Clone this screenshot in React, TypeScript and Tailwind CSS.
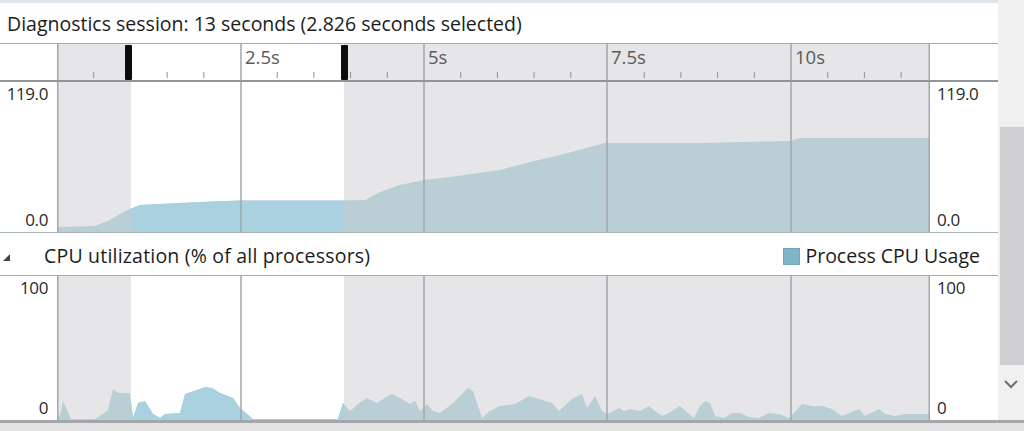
import React from "react"

const font = { fontFamily: '"Open Sans", "Noto Sans", sans-serif' }

const majors = [
  { x: 241, label: "2.5s" },
  { x: 424, label: "5s" },
  { x: 607, label: "7.5s" },
  { x: 791, label: "10s" },
]

const SEL_A = 131
const SEL_B = 344

// memory-ish curve, global page coords
const memPts: [number, number][] = [
  [57, 227], [95, 226], [110, 220], [125, 211], [140, 205], [180, 203], [200, 202],
  [240, 200.5], [340, 200.5], [365, 200], [380, 192], [400, 185], [424, 180],
  [450, 177], [500, 170], [530, 162], [560, 155], [590, 147], [605, 143],
  [700, 143], [790, 141], [800, 138], [930, 138],
]

const cpuPts: [number, number][] = [
  [57, 419], [60, 415], [63, 401], [67, 410], [71, 419], [95, 419], [103, 414], [108, 410],
  [113, 389], [118, 393], [130, 393], [133, 418], [138, 403], [145, 401], [153, 414],
  [160, 418], [165, 414], [180, 413], [185, 394], [197, 390], [205, 387], [212, 388],
  [220, 393], [233, 398], [240, 408], [253, 419], [338, 419], [343, 403], [350, 411],
  [358, 404], [367, 398], [377, 403], [383, 399], [392, 394], [400, 398], [410, 404],
  [415, 401], [420, 411], [427, 404], [433, 411], [440, 413], [453, 403], [460, 396],
  [468, 388], [473, 391], [482, 418], [490, 411], [500, 406], [515, 404], [529, 396],
  [539, 399], [552, 403], [559, 411], [572, 399], [582, 394], [587, 408], [595, 396],
  [602, 411], [607, 414], [619, 408], [624, 411], [630, 409], [640, 411], [649, 406],
  [655, 411], [662, 416], [669, 413], [680, 406], [689, 414], [694, 418], [700, 406],
  [705, 401], [710, 403], [715, 416], [724, 418], [732, 413], [740, 413], [749, 417],
  [759, 418], [769, 413], [779, 414], [789, 418], [802, 404], [812, 406], [822, 406],
  [832, 409], [842, 416], [849, 413], [859, 409], [865, 416], [879, 409], [885, 414],
  [895, 416], [905, 414], [925, 414], [930, 414],
]

function area(pts: [number, number][], base: number) {
  const first = pts[0]
  const last = pts[pts.length - 1]
  return (
    `M${first[0]},${base} ` +
    pts.map(p => `L${p[0]},${p[1]}`).join(" ") +
    ` L${last[0]},${base} Z`
  )
}

function Backdrop({ top, h }: { top: number; h: number }) {
  return (
    <>
      <rect x={57} y={top} width={873} height={h} fill="#e6e6e8" />
      <rect x={SEL_A} y={top} width={SEL_B - SEL_A} height={h} fill="#ffffff" />
    </>
  )
}

function GridLines({ top, h }: { top: number; h: number }) {
  return (
    <>
      {[57.75, ...majors.map(m => m.x), 929.25].map(x => (
        <line key={x} x1={x} x2={x} y1={top} y2={top + h} stroke="#a2a7ac" strokeWidth={1.5} />
      ))}
    </>
  )
}

function Chart({
  id,
  top,
  h,
  pts,
}: {
  id: string
  top: number
  h: number
  pts: [number, number][]
}) {
  const d = area(pts, top + h)
  return (
    <svg width={873} height={h} viewBox={`57 ${top} 873 ${h}`} className="block shrink-0">
      <defs>
        <clipPath id={id}>
          <rect x={SEL_A} y={top} width={SEL_B - SEL_A} height={h} />
        </clipPath>
      </defs>
      <Backdrop top={top} h={h} />
      <path d={d} fill="#b9ced5" />
      <path d={d} fill="#a9d1df" clipPath={`url(#${id})`} />
      <GridLines top={top} h={h} />
    </svg>
  )
}

function Ruler() {
  const ticks: number[] = []
  for (let k = 1; k < 24; k++) {
    if (k % 5 === 0) continue
    const x = 57 + k * 36.7
    if (x > 926) break
    ticks.push(x)
  }
  return (
    <svg width={873} height={36} viewBox="57 44 873 36" className="block shrink-0">
      <Backdrop top={44} h={36} />
      {ticks.map(x => (
        <line key={x} x1={x} x2={x} y1={72} y2={78} stroke="#8c9196" strokeWidth={1} />
      ))}
      <GridLines top={44} h={36} />
      {majors.map(m => (
        <text
          key={m.label}
          x={m.x + 4}
          y={64}
          fontSize={18.5}
          fill="#5a5a5a"
          style={font}
        >
          {m.label}
        </text>
      ))}
      <rect x={125} y={45} width={7} height={35} rx={1} fill="#0c0c0c" />
      <rect x={341} y={45} width={7} height={35} rx={1} fill="#0c0c0c" />
    </svg>
  )
}

function Labels({ top, bottom, right }: { top: string; bottom: string; right?: boolean }) {
  return (
    <div
      className={
        right
          ? "w-[68px] shrink-0 flex flex-col justify-between pl-[7px] pt-[2px] pb-[2px] text-[17px] tracking-[-0.4px] text-[#2a2a2a] leading-[20px]"
          : "w-[57px] shrink-0 flex flex-col justify-between items-end pr-[9px] pt-[2px] pb-[2px] text-[17px] tracking-[-0.4px] text-[#2a2a2a] leading-[20px]"
      }
    >
      <span>{top}</span>
      <span>{bottom}</span>
    </div>
  )
}

export default function App() {
  return (
    <div className="w-[1024px] h-[431px] flex flex-col bg-[#f0f0f0] overflow-hidden" style={font}>
      <div className="flex flex-1 min-h-0">
        <div className="w-[998px] shrink-0 flex flex-col bg-white">
          <div className="h-[3px] bg-[#dfe4ea]" />
          <div className="h-[41px] border-b border-[#a4a8ad] flex items-center pl-[7px] pt-[1px] text-[19.5px] text-[#1c1c1c]">
            Diagnostics session: 13 seconds (2.826 seconds selected)
          </div>
          <div className="h-[38px] border-b-2 border-[#8f959b] flex">
            <div className="w-[57px] shrink-0" />
            <Ruler />
            <div className="w-[68px] shrink-0" />
          </div>
          <div className="h-[151px] border-b border-[#a6b4ba] flex">
            <Labels top="119.0" bottom="0.0" />
            <Chart id="mem" top={82} h={150} pts={memPts} />
            <Labels top="119.0" bottom="0.0" right />
          </div>
          <div className="h-[43px] border-b border-[#a4a8ad] flex items-center pt-[4px] text-[19.5px] text-[#1c1c1c]">
            <svg width={9} height={9} viewBox="0 0 9 9" className="ml-[2px] mt-[2px]">
              <path d="M8,1 L8,8 L1,8 Z" fill="#444" />
            </svg>
            <span className="ml-[33px] tracking-[0.2px]">CPU utilization (% of all processors)</span>
            <div className="ml-auto mr-[18px] flex items-center gap-[5px]">
              <span className="w-[17px] h-[17px] bg-[#80b5c8] border border-[#6fa6ba]" />
              <span>Process CPU Usage</span>
            </div>
          </div>
          <div className="h-[144px] flex">
            <Labels top="100" bottom="0" />
            <Chart id="cpu" top={276} h={144} pts={cpuPts} />
            <Labels top="100" bottom="0" right />
          </div>
        </div>
        <div className="flex-1 flex flex-col bg-[#f0f0f0]">
          <div className="h-[127px]" />
          <div className="h-[238px] ml-[2px] bg-[#cfcfd2]" />
          <div className="flex-1 flex items-start justify-center pt-[14px]">
            <svg width={16} height={10} viewBox="0 0 16 10">
              <path d="M2,2 L8,8 L14,2" fill="none" stroke="#6f6f6f" strokeWidth={2} />
            </svg>
          </div>
        </div>
      </div>
      <div className="h-[11px] shrink-0 border-t-[3px] border-[#a3a6aa] bg-[#e3e3e3]" />
    </div>
  )
}
